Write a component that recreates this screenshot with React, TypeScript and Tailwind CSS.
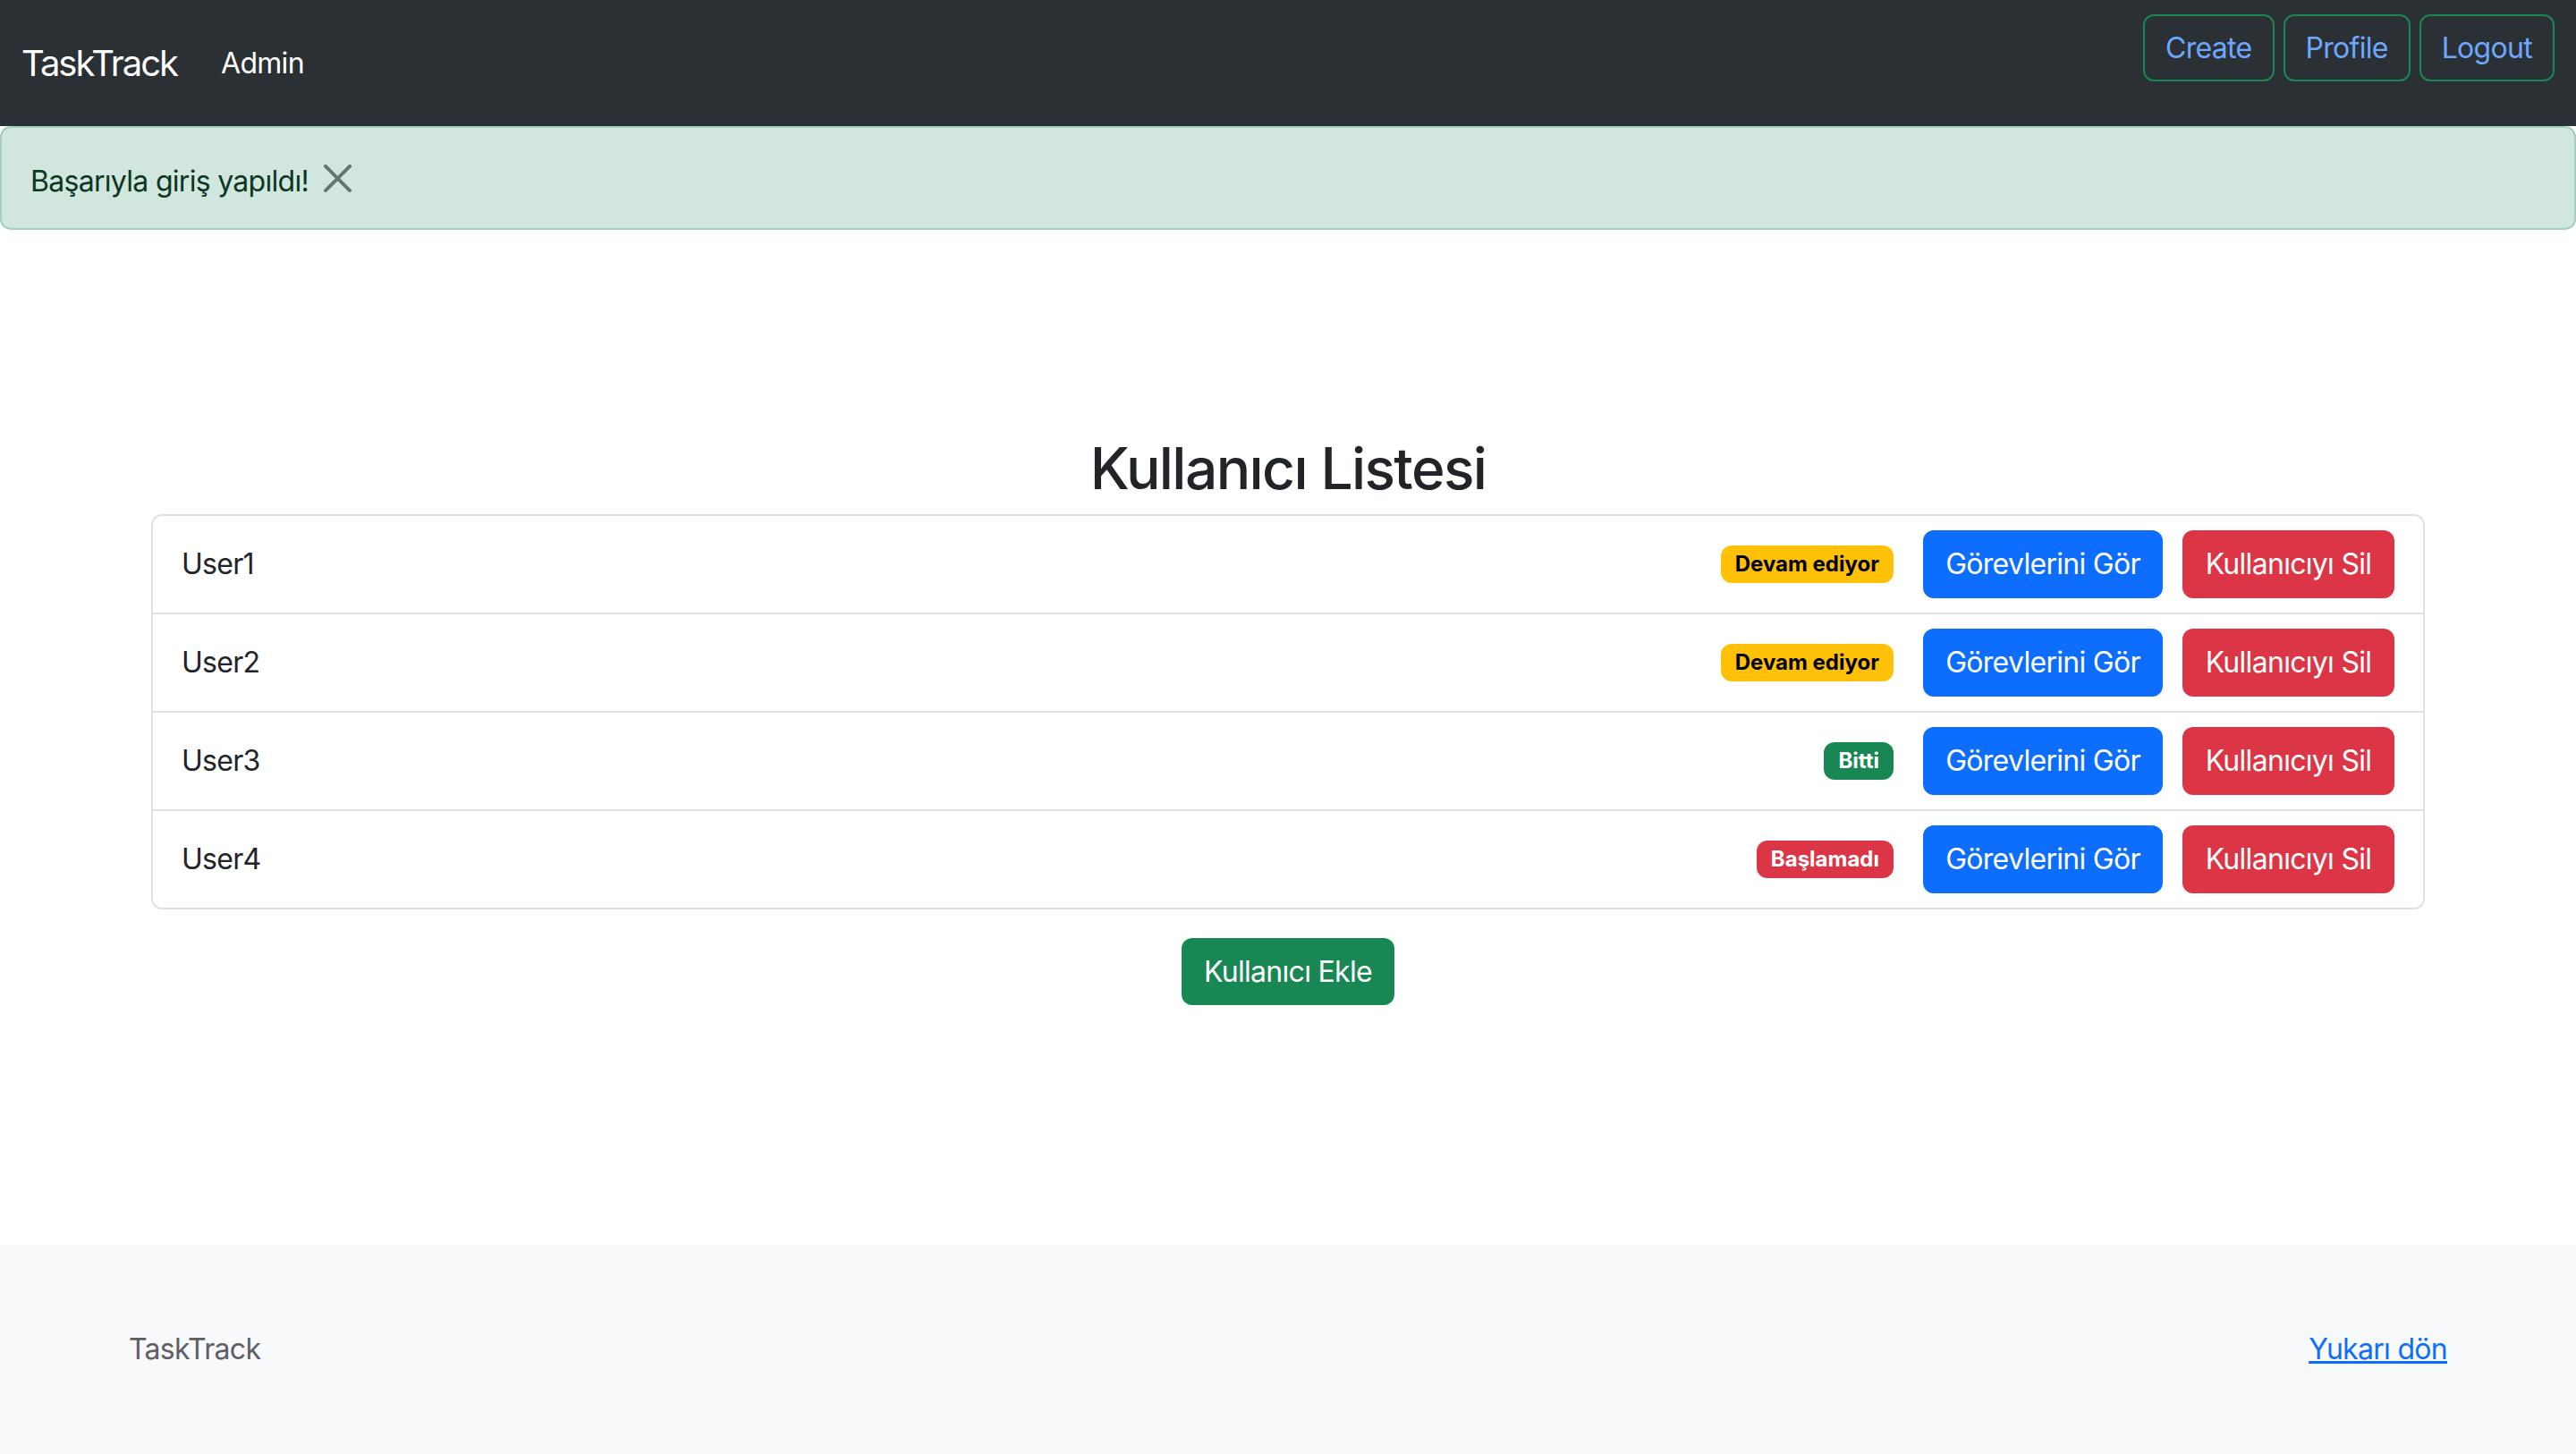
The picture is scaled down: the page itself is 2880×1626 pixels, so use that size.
import React from "react";

type U = { name: string; status: string; badge: string };

const users: U[] = [
  { name: "User1", status: "Devam ediyor", badge: "bg-[#ffc107] text-black" },
  { name: "User2", status: "Devam ediyor", badge: "bg-[#ffc107] text-black" },
  { name: "User3", status: "Bitti", badge: "bg-[#198754] text-white" },
  { name: "User4", status: "Başlamadı", badge: "bg-[#dc3545] text-white" },
];

function CloseIcon() {
  return (
    <svg viewBox="0 0 16 16" className="w-[31px] h-[31px] ml-[17px]" aria-hidden="true">
      <path
        fill="#000"
        fillOpacity={0.5}
        d="M.293.293a1 1 0 0 1 1.414 0L8 6.586 14.293.293a1 1 0 1 1 1.414 1.414L9.414 8l6.293 6.293a1 1 0 0 1-1.414 1.414L8 9.414l-6.293 6.293a1 1 0 0 1-1.414-1.414L6.586 8 .293 1.707a1 1 0 0 1 0-1.414z"
      />
    </svg>
  );
}

export default function App() {
  return (
    <div className="min-h-screen flex flex-col bg-white font-['Inter','Noto_Sans',sans-serif] text-[#212529]">
      <nav className="h-[141px] shrink-0 bg-[#2b3035] flex justify-between px-[24px]">
        <div className="flex items-center">
          <span className="text-[40px] leading-[60px] tracking-[-0.05em] text-white mr-[49px]">TaskTrack</span>
          <span className="text-[32px] leading-[48px] tracking-[-0.022em] text-white">Admin</span>
        </div>
        <div className="flex items-start gap-[10px] pt-[16px]">
          {["Create", "Profile", "Logout"].map((l) => (
            <button
              key={l}
              className="h-[75px] px-[23px] border-2 border-[#198754] rounded-[12px] text-[32px] leading-[48px] tracking-[-0.022em] text-[#6ea8fe]"
            >
              {l}
            </button>
          ))}
        </div>
      </nav>

      <div className="h-[116px] shrink-0 border-2 border-[#a3cfbb] bg-[#d1e7dd] rounded-[12px] flex items-center px-[32px] text-[32px] leading-[48px] tracking-[-0.022em] text-[#0a3622]">
        <span className="mt-[8px]">Başarıyla giriş yapıldı!</span>
        <CloseIcon />
      </div>

      <main className="flex-1 flex flex-col items-center">
        <h2 className="mt-[228px] mb-[13px] text-[64px] leading-[77px] tracking-[-0.025em] font-medium text-[#212529]">
          Kullanıcı Listesi
        </h2>
        <ul className="w-[2542px] border-2 border-[#dee2e6] rounded-[12px]">
          {users.map((u, i) => (
            <li
              key={u.name}
              className={
                "flex items-center px-[32px] py-[16px] " +
                (i < users.length - 1 ? "border-b-2 border-[#dee2e6]" : "")
              }
            >
              <span className="flex-1 text-[32px] leading-[48px] tracking-[-0.022em]">{u.name}</span>
              <span
                className={
                  "h-[42px] px-[16px] rounded-[12px] text-[24px] font-bold flex items-center mr-[33px] " +
                  u.badge
                }
              >
                {u.status}
              </span>
              <button className="w-[268px] h-[76px] rounded-[12px] bg-[#0d6efd] text-white text-[32px] leading-[48px] tracking-[-0.022em] mr-[22px]">
                Görevlerini Gör
              </button>
              <button className="w-[237px] h-[76px] rounded-[12px] bg-[#dc3545] text-white text-[32px] leading-[48px] tracking-[-0.022em]">
                Kullanıcıyı Sil
              </button>
            </li>
          ))}
        </ul>
        <button className="mt-[32px] w-[238px] h-[75px] rounded-[12px] bg-[#198754] text-white text-[32px] leading-[48px] tracking-[-0.022em]">
          Kullanıcı Ekle
        </button>
      </main>

      <footer className="h-[234px] shrink-0 bg-[#f8f9fa]">
        <div className="w-[2640px] mx-auto px-[24px] pt-[93px] flex justify-between text-[32px] leading-[48px] tracking-[-0.022em]">
          <span className="text-[#5c6064]">TaskTrack</span>
          <a href="#" className="text-[#0d6efd] underline">
            Yukarı dön
          </a>
        </div>
      </footer>
    </div>
  );
}
